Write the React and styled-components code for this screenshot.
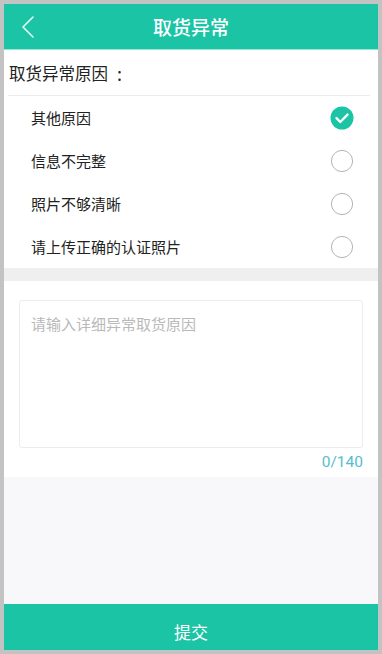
import styled, { createGlobalStyle } from "styled-components";

const Global = createGlobalStyle`
  html, body {
    margin: 0;
    padding: 0;
    background: #c3c3c3;
  }
  * { box-sizing: border-box; }
`;

const reasons = ["其他原因", "信息不完整", "照片不够清晰", "请上传正确的认证照片"];

const CheckIcon = ({ checked }) =>
  checked ? (
    <svg width="24" height="24" viewBox="0 0 24 24">
      <circle cx="12" cy="12" r="11.5" fill="#1ac4a5" />
      <path d="M6.5 12.2l3.8 3.8 7.2-7.4" fill="none" stroke="#fff" strokeWidth="2.4" strokeLinecap="round" strokeLinejoin="round" />
    </svg>
  ) : (
    <svg width="24" height="24" viewBox="0 0 24 24">
      <circle cx="12" cy="12" r="10.6" fill="none" stroke="#b4b4b4" strokeWidth="1" />
    </svg>
  );

export default function App() {
  return (
    <>
      <Global />
      <Page>
        <Header>
          <Back>
            <svg width="14" height="24" viewBox="0 0 14 24">
              <path d="M12 2L2 12l10 10" fill="none" stroke="#e8fbf6" strokeWidth="1.6" strokeLinecap="round" strokeLinejoin="round" />
            </svg>
          </Back>
          <Title>取货异常</Title>
        </Header>
        <Section>
          <SectionTitle>
            取货异常原因<Colon>:</Colon>
          </SectionTitle>
          <Divider />
          {reasons.map((r, i) => (
            <Row key={r}>
              <RowText>{r}</RowText>
              <CheckIcon checked={i === 0} />
            </Row>
          ))}
        </Section>
        <Band />
        <InputSection>
          <TextBox placeholder="请输入详细异常取货原因" maxLength={140} />
          <Counter>0/140</Counter>
        </InputSection>
        <Filler />
        <Submit>提交</Submit>
      </Page>
    </>
  );
}

const Page = styled.div`
  margin: 4px;
  height: 646px;
  background: #fff;
  display: flex;
  flex-direction: column;
  font-family: "Noto Sans CJK SC", "Noto Sans", sans-serif;
  overflow: hidden;
`;

const Header = styled.div`
  height: 46px;
  background: #1ac4a5;
  display: flex;
  align-items: center;
  justify-content: center;
  position: relative;
  border-bottom: 1px solid #8fe7d6;
`;

const Back = styled.div`
  position: absolute;
  left: 17px;
  top: 11px;
  display: flex;
`;

const Title = styled.div`
  color: #fff;
  font-size: 19px;
  font-weight: 500;
`;

const Section = styled.div`
  background: #fff;
`;

const SectionTitle = styled.div`
  height: 45px;
  display: flex;
  align-items: center;
  padding-left: 5px;
  font-size: 16.5px;
  color: #222;
`;

const Colon = styled.span`
  margin-left: 9px;
  font-size: 18px;
`;

const Divider = styled.div`
  height: 1px;
  background: #ececec;
  margin: 0 8px 0 4px;
`;

const Row = styled.div`
  height: 43px;
  display: flex;
  align-items: center;
  justify-content: space-between;
  padding: 0 24px 0 27px;
`;

const RowText = styled.span`
  font-size: 15px;
  color: #222;
`;

const Band = styled.div`
  height: 13px;
  background: #efefef;
`;

const InputSection = styled.div`
  background: #fff;
  padding: 19px 15px 0;
  height: 196px;
  display: flex;
  flex-direction: column;
`;

const TextBox = styled.textarea`
  height: 148px;
  border: 1px solid #ececec;
  border-radius: 3px;
  padding: 12px 11px;
  font-family: inherit;
  font-size: 15px;
  resize: none;
  outline: none;
  &::placeholder {
    color: #b9b9b9;
  }
`;

const Counter = styled.div`
  text-align: right;
  margin-top: 5px;
  font-family: Roboto, "Noto Sans", sans-serif;
  font-size: 15.5px;
  color: #58bccf;
`;

const Filler = styled.div`
  flex: 1;
  background: #f8f8fa;
`;

const Submit = styled.button`
  height: 46px;
  border: none;
  background: #1ac4a5;
  color: #fff;
  font-family: inherit;
  font-size: 17px;
  padding-top: 10px;
`;
